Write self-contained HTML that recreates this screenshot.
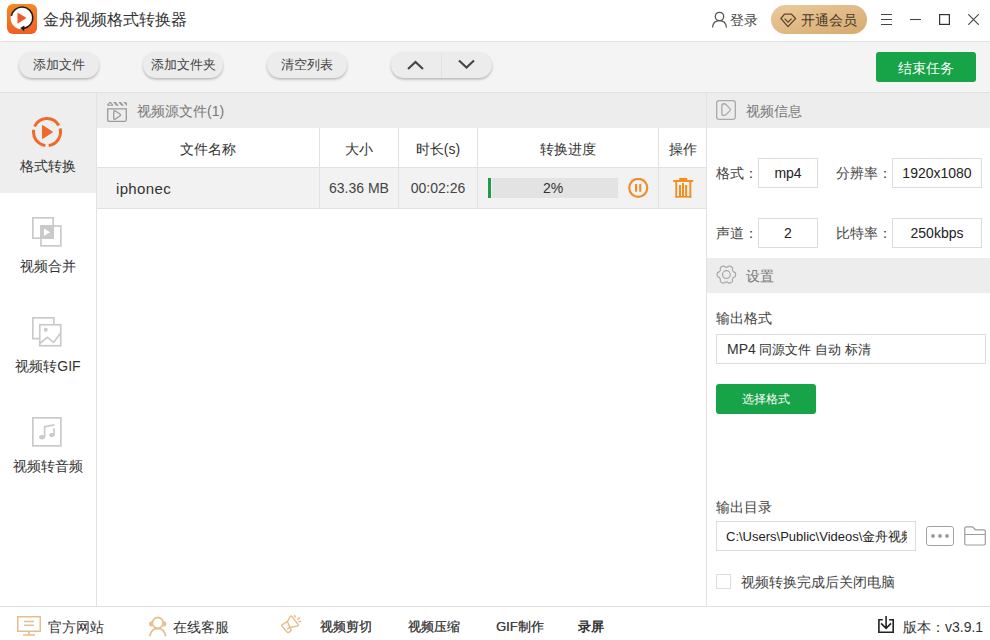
<!DOCTYPE html>
<html><head><meta charset="utf-8">
<style>
*{box-sizing:border-box;margin:0;padding:0}
html,body{width:990px;height:640px;overflow:hidden;background:#fff;font-family:"Liberation Sans",sans-serif;color:#333}
div,svg{position:absolute}
.t{white-space:nowrap;line-height:20px}
.pill{top:52px;height:26px;border-radius:13px;background:#ececec;box-shadow:0 1.5px 2.5px rgba(0,0,0,.26);font-size:13px;line-height:26px;text-align:center;color:#444}
.lbl{font-size:14px;color:#444;line-height:20px;white-space:nowrap}
.box{border:1px solid #dcdcdc;background:#fff;font-size:14px;text-align:center;color:#222;white-space:nowrap}
.green{background:#17a347;color:#fff;border-radius:3px;text-align:center}
.th{top:128px;height:39px;line-height:42px;text-align:center;font-size:14px;color:#333}
.td{top:168px;height:40px;line-height:41px;text-align:center;font-size:14px;color:#444}
.vl{width:1px;background:#e2e2e2}
.hl{height:1px;background:#e2e2e2}
.ft{top:617px;line-height:20px;font-size:14px;color:#333;white-space:nowrap}
</style></head><body>
<!-- title bar -->
<div class="hl" style="left:0;top:41px;width:990px;background:#e0e0e0"></div>
<svg style="left:7px;top:4px" width="30" height="30" viewBox="0 0 30 30">
  <defs><linearGradient id="lg" x1="0" y1="0" x2="0" y2="1"><stop offset="0" stop-color="#f7891f"/><stop offset="1" stop-color="#ef5f24"/></linearGradient></defs>
  <rect x="0" y="0" width="30" height="30" rx="6" fill="url(#lg)"/>
  <circle cx="14.8" cy="14" r="11.2" fill="#fff"/>
  <path d="M4.36 11.9 A10.8 10.8 0 1 1 16.9 24.4" fill="none" stroke="#1a1a1a" stroke-width="1.6"/>
  <path d="M17.4 21.5 L13.2 24 L17.2 27.3 Z" fill="#1a1a1a"/>
  <path d="M10.5 8.4 L19.5 14 L10.5 19.7 Z" fill="#f05a28"/>
</svg>
<div class="t" style="left:43px;top:10px;font-size:16px;color:#333">金舟视频格式转换器</div>
<svg style="left:711px;top:11px" width="17" height="17" viewBox="0 0 17 17"><circle cx="8.5" cy="5.5" r="4.2" fill="none" stroke="#555" stroke-width="1.3"/><path d="M1.5 16.5 C2 11.5 5 9.7 8.5 9.7 C12 9.7 15 11.5 15.5 16.5" fill="none" stroke="#555" stroke-width="1.3"/></svg>
<div class="t" style="left:730px;top:10px;font-size:14px;color:#444">登录</div>
<div style="left:771px;top:5px;width:96px;height:29px;border-radius:15px;background:linear-gradient(165deg,#ebcb9c,#d6a96f)"></div>
<svg style="left:780px;top:13px" width="17" height="15" viewBox="0 0 17 15"><path d="M4.5 1.2 H11.5 L15.6 5.5 L8 13.6 L0.9 5.5 Z" fill="none" stroke="#624a2e" stroke-width="1.3" stroke-linejoin="round"/><path d="M4.6 5.6 L8.1 9.1 L11.6 5.6" fill="none" stroke="#624a2e" stroke-width="1.3"/></svg>
<div class="t" style="left:801px;top:10px;font-size:14px;color:#4a3a2a">开通会员</div>
<svg style="left:881px;top:13px" width="11" height="13" viewBox="0 0 11 13"><path d="M0 1.5H11M0 6.5H11M0 11.5H11" stroke="#444" stroke-width="1.1"/></svg>
<svg style="left:910px;top:13px" width="11" height="13" viewBox="0 0 11 13"><path d="M0 6.5H11" stroke="#444" stroke-width="1.1"/></svg>
<svg style="left:939px;top:14px" width="11" height="11" viewBox="0 0 11 11"><rect x="0.6" y="0.6" width="9.8" height="9.8" fill="none" stroke="#333" stroke-width="1.2"/></svg>
<svg style="left:968px;top:14px" width="11" height="11" viewBox="0 0 11 11"><path d="M0.3 0.3L10.7 10.7M10.7 0.3L0.3 10.7" stroke="#444" stroke-width="1.15"/></svg>

<!-- toolbar -->
<div style="left:0;top:42px;width:990px;height:50px;background:#f4f4f4"></div>
<div class="hl" style="left:0;top:92px;width:990px"></div>
<div class="pill" style="left:19px;width:80px">添加文件</div>
<div class="pill" style="left:143px;width:80px">添加文件夹</div>
<div class="pill" style="left:267px;width:80px">清空列表</div>
<div class="pill" style="left:391px;width:101px"></div>
<div style="left:441px;top:52px;width:1px;height:26px;background:#e3e3e3"></div>
<svg style="left:406px;top:59px" width="18" height="12" viewBox="0 0 18 12"><path d="M2 10 L9.5 3 L17 10" fill="none" stroke="#444" stroke-width="2.1"/></svg>
<svg style="left:457px;top:58px" width="18" height="12" viewBox="0 0 18 12"><path d="M2 2.5 L9.5 9.5 L17 2.5" fill="none" stroke="#444" stroke-width="2.1"/></svg>
<div class="green" style="left:876px;top:52px;width:100px;height:30px;line-height:32px;font-size:14px">结束任务</div>

<!-- sidebar -->
<div style="left:0;top:93px;width:96px;height:100px;background:#eeeeee"></div>
<div class="vl" style="left:96px;top:93px;height:513px"></div>
<svg style="left:31px;top:116px" width="32" height="32" viewBox="0 0 32 32"><path d="M14.35 29.40 A13.5 13.5 0 0 1 2.71 13.66 M3.67 10.51 A13.5 13.5 0 0 1 27.81 9.46 M29.04 12.51 A13.5 13.5 0 0 1 17.65 29.40" fill="none" stroke="#ef6a2a" stroke-width="3"/><path d="M11.5 9.5 L21.5 16 L11.5 22.5 Z" fill="#ef6a2a" stroke="#ef6a2a" stroke-width="1" stroke-linejoin="round"/></svg>
<div class="t" style="left:0;top:156px;width:96px;text-align:center;font-size:14px;color:#333">格式转换</div>

<svg style="left:32px;top:217px" width="32" height="32" viewBox="0 0 32 32"><rect x="0.85" y="0.85" width="20.3" height="20.3" fill="none" stroke="#cacaca" stroke-width="1.7"/><rect x="8.95" y="8.95" width="19.9" height="19.9" fill="none" stroke="#cacaca" stroke-width="1.7"/><rect x="8.1" y="8.1" width="13.9" height="13.9" fill="#cacaca"/><path d="M11.9 11.6 L18.1 15.3 L11.9 19 Z" fill="#fff"/></svg>
<div class="t" style="left:0;top:256px;width:96px;text-align:center;font-size:14px;color:#333">视频合并</div>

<svg style="left:32px;top:317px" width="32" height="32" viewBox="0 0 32 32"><rect x="0.85" y="0.85" width="21" height="20.8" fill="none" stroke="#cacaca" stroke-width="1.7"/><rect x="7.75" y="7.75" width="21" height="21" fill="#fff" stroke="#cacaca" stroke-width="1.7"/><circle cx="13.75" cy="12.8" r="2" fill="#cacaca"/><path d="M8.1 26.25 L15.3 20.3 L21.6 25.3 L28.75 16" fill="none" stroke="#cacaca" stroke-width="1.7"/></svg>
<div class="t" style="left:0;top:356px;width:96px;text-align:center;font-size:14px;color:#333">视频转GIF</div>

<svg style="left:32px;top:417px" width="32" height="32" viewBox="0 0 32 32"><rect x="0.85" y="0.85" width="28" height="28" fill="none" stroke="#cacaca" stroke-width="1.7"/><path d="M12.6 20 V9.7 L22.5 7.8" fill="none" stroke="#cacaca" stroke-width="1.7"/><path d="M22 11.2 V18.7" fill="none" stroke="#cacaca" stroke-width="1.7"/><ellipse cx="10" cy="20.3" rx="2.9" ry="2.2" fill="#cacaca"/><ellipse cx="19.7" cy="18.1" rx="2.6" ry="2.1" fill="#cacaca"/></svg>
<div class="t" style="left:0;top:456px;width:96px;text-align:center;font-size:14px;color:#333">视频转音频</div>

<!-- main -->
<div style="left:97px;top:93px;width:609px;height:35px;background:#ededed"></div>
<svg style="left:106px;top:101px" width="22" height="22" viewBox="0 0 22 22">
  <path d="M1.6 4.2 L3.6 1.6 H4.7 L6.7 4.2 Z" fill="none" stroke="#9a9a9a" stroke-width="1.1" stroke-linejoin="round"/>
  <path d="M7.1 1 H9.8 L12.8 4.7 H10.2 Z M12.2 1 H14.9 L18.1 4.7 H15.5 Z M17.3 1 H19.5 Q21 1 21 2.5 V4.7 H20.6 Z" fill="#9a9a9a"/>
  <path d="M1.7 7.8 H20.3 V18.8 Q20.3 20.3 18.8 20.3 H3.2 Q1.7 20.3 1.7 18.8 Z" fill="none" stroke="#9a9a9a" stroke-width="1.3"/>
  <path d="M7.8 10.5 Q7.6 9.6 8.6 9.7 Q9.2 9.8 9.8 10.3 L14.2 13.3 Q14.9 14 14.2 14.7 L9.8 17.7 Q9.2 18.2 8.6 18.3 Q7.6 18.4 7.7 17.4 Z" fill="none" stroke="#9a9a9a" stroke-width="1.3" stroke-linejoin="round"/>
</svg>
<div class="t" style="left:137px;top:101px;font-size:14px;color:#777">视频源文件(1)</div>

<div class="th" style="left:97px;width:222px">文件名称</div>
<div class="th" style="left:320px;width:78px">大小</div>
<div class="th" style="left:399px;width:78px">时长(s)</div>
<div class="th" style="left:478px;width:180px">转换进度</div>
<div class="th" style="left:659px;width:47px">操作</div>
<div class="hl" style="left:97px;top:167px;width:609px"></div>
<div style="left:97px;top:168px;width:609px;height:40px;background:#f2f2f2"></div>
<div class="hl" style="left:97px;top:208px;width:609px"></div>
<div class="vl" style="left:319px;top:128px;height:80px"></div>
<div class="vl" style="left:398px;top:128px;height:80px"></div>
<div class="vl" style="left:477px;top:128px;height:80px"></div>
<div class="vl" style="left:658px;top:128px;height:80px"></div>
<div class="td" style="left:116px;text-align:left;font-size:15px;letter-spacing:0.35px;color:#333">iphonec</div>
<div class="td" style="left:320px;width:78px">63.36 MB</div>
<div class="td" style="left:399px;width:78px">00:02:26</div>
<div style="left:488px;top:178px;width:3px;height:20px;background:#1f9b4a"></div><div style="left:492px;top:178px;width:126px;height:20px;background:#e3e3e3"></div><div style="left:488px;top:178px;width:130px;height:20px;font-size:14px;line-height:21px;text-align:center;color:#333">2%</div>
<svg style="left:627px;top:178px" width="23" height="21" viewBox="0 0 23 21"><circle cx="11.25" cy="9.8" r="9" fill="none" stroke="#ef8d2a" stroke-width="2.2"/><path d="M9.05 6V13.75M13.25 6V13.75" stroke="#ef8d2a" stroke-width="2.1"/></svg>
<svg style="left:673px;top:177px" width="21" height="22" viewBox="0 0 21 22" fill="#f18f1f"><rect x="6.25" y="0.9" width="8" height="2.2"/><rect x="0.2" y="3" width="20" height="2"/><rect x="2.3" y="4.9" width="1.85" height="15.7"/><rect x="16.35" y="4.9" width="1.95" height="15.7"/><rect x="2.3" y="19" width="16" height="1.6"/><rect x="9" y="6" width="2" height="13.2"/><rect x="6" y="8" width="2.05" height="11.2"/><rect x="12.1" y="8" width="2.05" height="11.2"/></svg>
<div class="vl" style="left:706px;top:93px;height:513px"></div>

<!-- right panel -->
<div style="left:707px;top:93px;width:283px;height:35px;background:#ededed"></div>
<svg style="left:716px;top:100px" width="20" height="20" viewBox="0 0 20 20"><rect x="0.65" y="0.65" width="18.7" height="18.7" rx="2.5" fill="none" stroke="#aaa" stroke-width="1.3"/><path d="M5.8 6 Q5.8 3.75 8 3.75 Q9 3.75 10 4.6 L14 8.6 Q14.8 9.6 14 10.6 L10 14.6 Q9 15.45 8 15.45 Q5.8 15.45 5.8 13.2 Z" fill="none" stroke="#a8a8a8" stroke-width="1.3" stroke-linejoin="round"/></svg>
<div class="t" style="left:746px;top:101px;font-size:14px;color:#777">视频信息</div>

<div class="lbl" style="left:716px;top:163px">格式：</div>
<div class="box" style="left:758px;top:158px;width:60px;height:30px;line-height:29px">mp4</div>
<div class="lbl" style="left:836px;top:163px">分辨率：</div>
<div class="box" style="left:892px;top:158px;width:90px;height:30px;line-height:29px">1920x1080</div>
<div class="lbl" style="left:716px;top:223px">声道：</div>
<div class="box" style="left:758px;top:218px;width:60px;height:30px;line-height:29px">2</div>
<div class="lbl" style="left:836px;top:223px">比特率：</div>
<div class="box" style="left:892px;top:218px;width:90px;height:30px;line-height:29px">250kbps</div>

<div style="left:707px;top:258px;width:283px;height:35px;background:#ededed"></div>
<svg style="left:715px;top:264px" width="23" height="22" viewBox="0 0 23 22"><path d="M20.60 10.60 L20.59 11.00 L20.56 11.40 L20.50 11.80 L20.39 12.19 L20.19 12.55 L19.80 12.85 L19.24 13.07 L18.75 13.27 L18.44 13.52 L18.23 13.79 L18.06 14.07 L17.90 14.35 L17.73 14.63 L17.58 14.92 L17.45 15.24 L17.39 15.63 L17.46 16.15 L17.55 16.75 L17.48 17.24 L17.27 17.60 L16.99 17.88 L16.67 18.13 L16.34 18.36 L16.00 18.57 L15.65 18.76 L15.29 18.93 L14.91 19.08 L14.52 19.18 L14.11 19.19 L13.65 19.00 L13.18 18.62 L12.76 18.30 L12.39 18.15 L12.06 18.11 L11.73 18.10 L11.40 18.10 L11.07 18.10 L10.74 18.11 L10.41 18.15 L10.04 18.30 L9.62 18.62 L9.15 19.00 L8.69 19.19 L8.28 19.18 L7.89 19.08 L7.51 18.93 L7.15 18.76 L6.80 18.57 L6.46 18.36 L6.13 18.13 L5.81 17.88 L5.53 17.60 L5.32 17.24 L5.25 16.75 L5.34 16.15 L5.41 15.63 L5.35 15.24 L5.22 14.92 L5.07 14.63 L4.90 14.35 L4.74 14.07 L4.57 13.79 L4.36 13.52 L4.05 13.27 L3.56 13.07 L3.00 12.85 L2.61 12.55 L2.41 12.19 L2.30 11.80 L2.24 11.40 L2.21 11.00 L2.20 10.60 L2.21 10.20 L2.24 9.80 L2.30 9.40 L2.41 9.01 L2.61 8.65 L3.00 8.35 L3.56 8.13 L4.05 7.93 L4.36 7.68 L4.57 7.41 L4.74 7.13 L4.90 6.85 L5.07 6.57 L5.22 6.28 L5.35 5.96 L5.41 5.57 L5.34 5.05 L5.25 4.45 L5.32 3.96 L5.53 3.60 L5.81 3.32 L6.13 3.07 L6.46 2.84 L6.80 2.63 L7.15 2.44 L7.51 2.27 L7.89 2.12 L8.28 2.02 L8.69 2.01 L9.15 2.20 L9.62 2.58 L10.04 2.90 L10.41 3.05 L10.74 3.09 L11.07 3.10 L11.40 3.10 L11.73 3.10 L12.06 3.09 L12.39 3.05 L12.76 2.90 L13.18 2.58 L13.65 2.20 L14.11 2.01 L14.52 2.02 L14.91 2.12 L15.29 2.27 L15.65 2.44 L16.00 2.63 L16.34 2.84 L16.67 3.07 L16.99 3.32 L17.27 3.60 L17.48 3.96 L17.55 4.45 L17.46 5.05 L17.39 5.57 L17.45 5.96 L17.58 6.28 L17.73 6.57 L17.90 6.85 L18.06 7.13 L18.23 7.41 L18.44 7.68 L18.75 7.93 L19.24 8.13 L19.80 8.35 L20.19 8.65 L20.39 9.01 L20.50 9.40 L20.56 9.80 L20.59 10.20 Z" fill="none" stroke="#a6a6a6" stroke-width="1.2" stroke-linejoin="round"/><circle cx="11.4" cy="10.6" r="3.9" fill="none" stroke="#a6a6a6" stroke-width="1.2"/></svg>
<div class="t" style="left:746px;top:266px;font-size:14px;color:#777">设置</div>

<div class="lbl" style="left:716px;top:308px">输出格式</div>
<div class="box" style="left:716px;top:334px;width:270px;height:30px;line-height:29px;text-align:left;padding-left:10px;font-size:13px;color:#333"><span style="font-size:14px">MP4</span> 同源文件 自动 标清</div>
<div class="green" style="left:716px;top:384px;width:100px;height:30px;line-height:31px;font-size:12px">选择格式</div>

<div class="lbl" style="left:716px;top:497px">输出目录</div>
<div class="box" style="left:716px;top:521px;width:200px;height:30px;"><div style="left:9px;top:0;width:181px;height:28px;overflow:hidden;line-height:29px;text-align:left;font-size:13px;color:#222">C:\Users\Public\Videos\金舟视频格式</div></div>
<div style="left:926px;top:526px;width:28px;height:20px;border:1.2px solid #a3a3a3;border-radius:3px"></div>
<svg style="left:931px;top:534px" width="18" height="4" viewBox="0 0 18 4"><circle cx="2" cy="1.9" r="1.85" fill="#999"/><circle cx="9" cy="1.9" r="1.85" fill="#999"/><circle cx="16" cy="1.9" r="1.85" fill="#999"/></svg>
<svg style="left:963px;top:525px" width="24" height="22" viewBox="0 0 24 22"><path d="M1.8 3.3 Q1.8 1.8 3.3 1.8 H9.3 L12.5 4.8 H20.8 Q22.3 4.8 22.3 6.3 V18.8 Q22.3 20 21.1 20 H3 Q1.8 20 1.8 18.8 Z M1.8 9.5 H22.3" fill="none" stroke="#9c9c9c" stroke-width="1.2" stroke-linejoin="round"/></svg>
<div style="left:716px;top:574px;width:15px;height:15px;border:1px solid #ddd;background:#fff"></div>
<div class="lbl" style="left:741px;top:572px">视频转换完成后关闭电脑</div>

<!-- footer -->
<div class="hl" style="left:0;top:606px;width:990px"></div>
<svg style="left:16px;top:615px" width="26" height="22" viewBox="0 0 26 22"><rect x="1.75" y="1.75" width="22.5" height="14.5" fill="none" stroke="#e4be90" stroke-width="1.5"/><path d="M8 6.5H18M8 10.3H18M13 16V19.5M7 20H19" stroke="#e4be90" stroke-width="1.6"/></svg>
<div class="ft" style="left:48px">官方网站</div>
<svg style="left:148px;top:615px" width="20" height="23" viewBox="0 0 20 23"><circle cx="9.75" cy="7.9" r="5.4" fill="none" stroke="#e6c193" stroke-width="1.8"/><path d="M4.3 6.2 Q1 6.4 1 8.9 Q1 11.4 4.3 11.6 Z M15.2 6.2 Q18.5 6.4 18.5 8.9 Q18.5 11.4 15.2 11.6 Z" fill="#e6c193"/><path d="M2 20.5 Q3.5 13.6 9.75 13.4 Q16 13.6 17.5 20.5" fill="none" stroke="#e6c193" stroke-width="1.8" stroke-linecap="round"/></svg>
<div class="ft" style="left:173px">在线客服</div>
<svg style="left:277px;top:611px" width="28" height="28" viewBox="0 0 28 28"><path d="M10.5 10.5 L13.2 5.6 Q14 4.3 15 5.5 L21.2 13.6 Q21.8 14.6 20.6 14.9 L12.8 16.4" fill="none" stroke="#e5c090" stroke-width="1.5" stroke-linejoin="round" stroke-linecap="round"/><path d="M10.5 10.5 L5.3 13.6 Q4.2 14.3 5 15.3 L10.3 21.3 Q11 22 11.8 21.4 L14.3 19.4 L12.8 16.4 Z" fill="none" stroke="#e5c090" stroke-width="1.5" stroke-linejoin="round"/><path d="M10 18.2 L12.8 16.4" stroke="#e5c090" stroke-width="1.4"/><path d="M17.6 4.6 L18.3 6 M20.6 8.1 L22.6 6.8 M21.6 10.5 L23.5 10.5" stroke="#e5c090" stroke-width="1.5" stroke-linecap="round"/></svg>
<div class="ft" style="left:320px;font-size:13px;color:#444;text-shadow:0.45px 0 0 #444">视频剪切</div>
<div class="ft" style="left:408px;font-size:13px;color:#444;text-shadow:0.45px 0 0 #444">视频压缩</div>
<div class="ft" style="left:496px;font-size:13px;color:#444;text-shadow:0.25px 0 0 #444">GIF制作</div>
<div class="ft" style="left:578px;font-size:13px;font-weight:bold;color:#333">录屏</div>
<svg style="left:877px;top:615px" width="19" height="20" viewBox="0 0 19 20"><path d="M5.8 4.7 H1.9 V17.2 H16.2 V4.7 H12.1" fill="none" stroke="#222" stroke-width="1.6"/><path d="M9.1 1.1 V13 M4.1 8.4 L9.1 13.4 L14 8.4" fill="none" stroke="#222" stroke-width="1.6"/></svg>
<div class="ft" style="left:903px;top:617px">版本：v3.9.1</div>
</body></html>
